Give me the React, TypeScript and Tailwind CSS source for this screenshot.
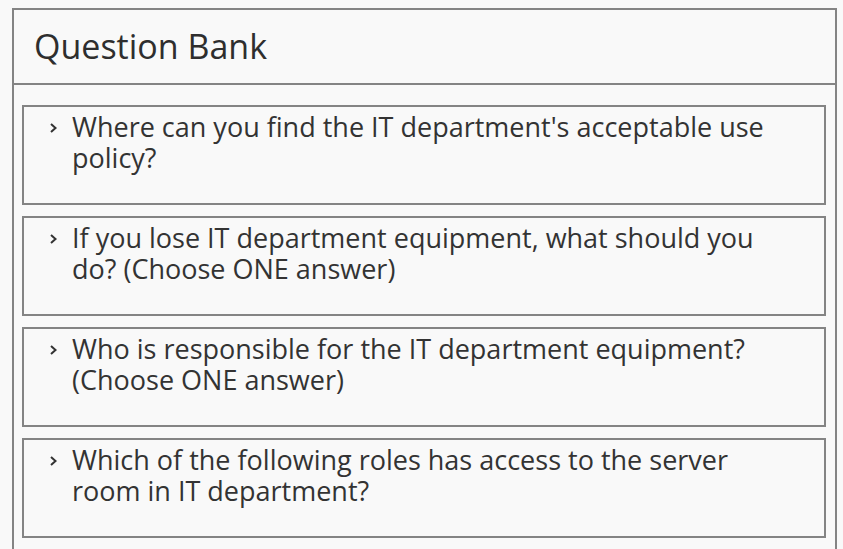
// Question bank panel: header + collapsed accordion items.

const QUESTIONS = [
  "Where can you find the IT department's acceptable use policy?",
  'If you lose IT department equipment, what should you do? (Choose ONE answer)',
  'Who is responsible for the IT department equipment? (Choose ONE answer)',
  'Which of the following roles has access to the server room in IT department?',
]

function Chevron() {
  return (
    <svg width="10" height="12" viewBox="0 0 10 12" className="shrink-0 mt-[11px]">
      <polyline points="3,2 7.5,6 3,10" fill="none" stroke="#333" strokeWidth="2" />
    </svg>
  )
}

export default function App() {
  return (
    <div className="min-h-screen bg-[#f9f9f9] pl-3 pr-[6px] pt-2" style={{ fontFamily: '"Open Sans", "Noto Sans", sans-serif' }}>
      <div className="border-2 border-b-0 border-[#848484] h-[560px]">
        <div className="h-[75px] border-b-2 border-[#848484] pl-5 pt-[13px] text-[34px] text-[#2e2e2e] leading-[47px]">
          Question Bank
        </div>
        <div className="flex flex-col gap-[11px] pl-2 pr-[9px] pt-5">
          {QUESTIONS.map(q => (
            <div key={q} className="h-[100px] border-2 border-[#848484] flex gap-[14px] pl-6 pr-11 pt-1">
              <Chevron />
              <div className="text-[27px] leading-[31px] text-[#333]">{q}</div>
            </div>
          ))}
        </div>
      </div>
    </div>
  )
}
